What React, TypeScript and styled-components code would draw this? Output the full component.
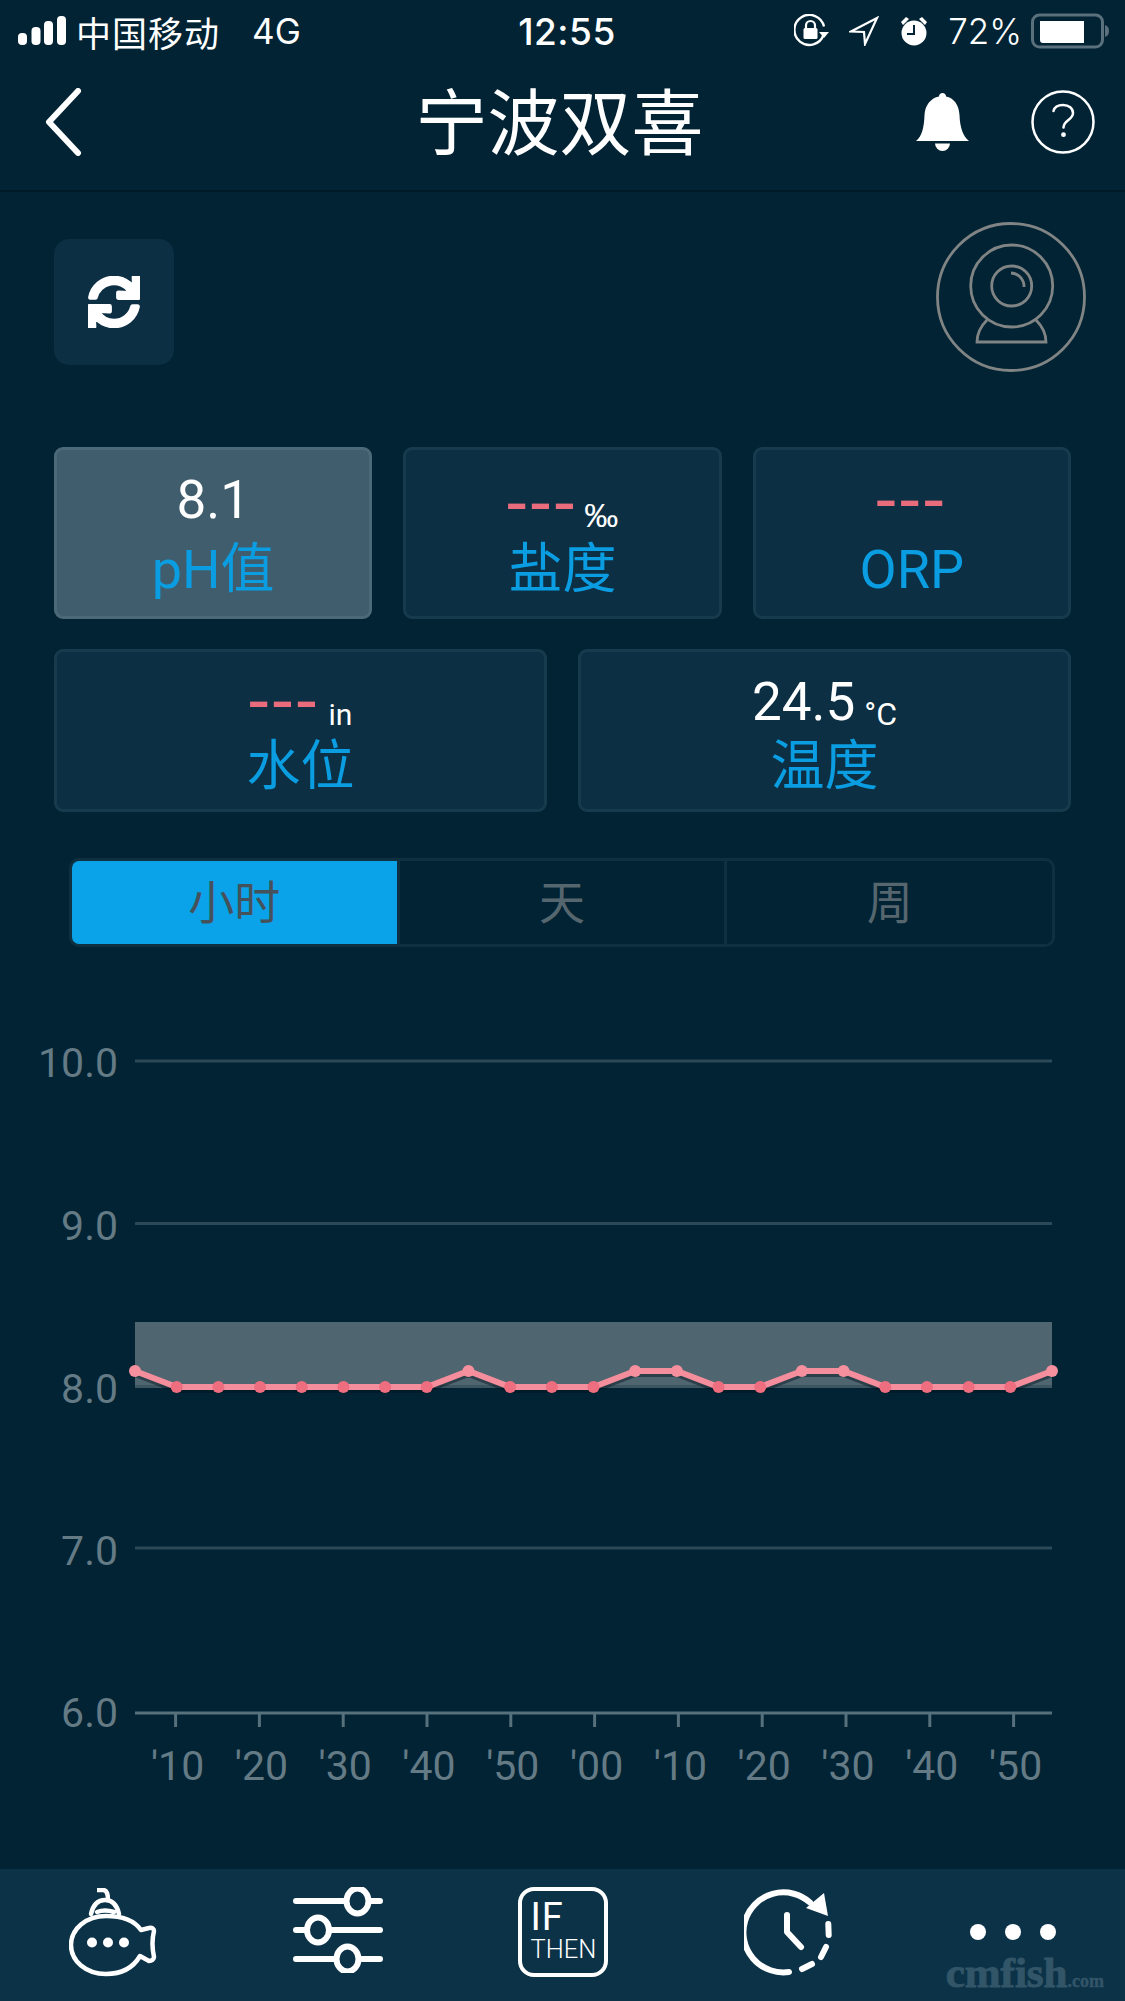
import React from "react";
import styled, { createGlobalStyle } from "styled-components";
import { FaSync } from "react-icons/fa";

const Global = createGlobalStyle`
  html, body { margin: 0; padding: 0; background: #012333; }
  * { box-sizing: border-box; }
`;
const FONT = `Roboto, "Noto Sans CJK SC", sans-serif`;
const UI_FONT = `Inter, "Noto Sans CJK SC", sans-serif`;

const Page = styled.div`
  width: 1125px; height: 2001px; display: flex; flex-direction: column;
  background: #012333; color: #fff; font-family: ${FONT}; overflow: hidden;
`;
const Header = styled.header`
  height: 192px; border-bottom: 2px solid #001a28; display: flex; flex-direction: column;
`;
const StatusBar = styled.div`
  height: 62px; display: grid; grid-template-columns: 1fr auto 1fr; align-items: center; padding: 0 15px 0 18px;
`;
const StatusLeft = styled.div`
  display: flex; align-items: center; font-family: ${UI_FONT};
`;
const Carrier = styled.span`margin-left: 10px; font-size: 35px; font-weight: 400; letter-spacing: 1px;`;
const Network = styled.span`margin-left: 32px; font-size: 35px; font-weight: 400;`;
const Time = styled.div`font-family: ${UI_FONT}; font-size: 37px; font-weight: 500; letter-spacing: 0.5px; margin-left: 6px;`;
const StatusRight = styled.div`
  display: flex; align-items: center; justify-content: flex-end;
`;
const Percent = styled.span`font-family: ${UI_FONT}; font-size: 35px; font-weight: 300; margin: 0 9px 0 19px;`;
const StatusIcon = styled.svg<{ $ml?: number }>`display: block; margin-left: ${(p) => p.$ml ?? 0}px;`;
const NavBar = styled.div`
  flex: 1; display: flex; align-items: center; justify-content: space-between; padding: 0 30px 8px 42px;
`;
const Title = styled.h1`
  margin: 6px 0 0 117px; font-size: 72px; font-weight: 400; line-height: 80px; letter-spacing: 0;
`;
const NavRight = styled.div`display: flex; align-items: center; gap: 61px;`;

const Toolbar = styled.div`
  display: flex; justify-content: space-between; align-items: flex-start; padding: 30px 37px 0 54px; height: 179px;
`;
const RefreshButton = styled.button`
  width: 120px; height: 126px; margin-top: 17px; padding: 0; border: 0; border-radius: 15px;
  background: #0c2f43; color: #fff; display: flex; align-items: center; justify-content: center;
`;
const Cards = styled.section`
  margin-top: 76px; padding: 0 54px; display: flex; flex-direction: column; gap: 30px;
`;
const CardRow = styled.div<{ $h: number }>`
  display: flex; gap: 31px; height: ${(p) => p.$h}px;
`;
const Card = styled.div<{ $active?: boolean }>`
  flex: 1; display: flex; flex-direction: column; align-items: center; border-radius: 9px;
  background: ${(p) => (p.$active ? "#3f5d6c" : "#0c2f43")};
  border: 3px solid ${(p) => (p.$active ? "#4b6977" : "#173a4d")};
`;
const ValueSlot = styled.div<{ $h: number }>`
  height: ${(p) => p.$h}px; display: flex; align-items: flex-start; justify-content: center; line-height: 60px;
`;
const Value = styled.span<{ $top: number }>`
  font-size: 53px; font-weight: 400; color: #fff; margin-top: ${(p) => p.$top}px;
`;
const Dashes = styled.span<{ $top: number }>`
  font-size: 72px; font-weight: 400; letter-spacing: 4px; color: #e96c7d; line-height: 60px; margin-top: ${(p) => p.$top}px;
`;
const Unit = styled.span<{ $top: number; $size: number; $ml: number }>`
  font-size: ${(p) => p.$size}px; font-weight: 400; color: #fff; margin-left: ${(p) => p.$ml}px; margin-top: ${(p) => p.$top}px;
`;
const PerMille = styled(Unit)`font-family: "Liberation Sans", sans-serif;`;
const Label = styled.div`font-size: 54px; line-height: 60px; color: #0a9de2; font-weight: 400;`;

const Tabs = styled.div`
  margin: 46px 70px 0 69px; height: 89px; display: flex; border: 3px solid #0f3040; border-radius: 10px; overflow: hidden;
`;
const Tab = styled.div<{ $active?: boolean }>`
  flex: 1; display: flex; align-items: center; justify-content: center; padding-bottom: 7px; font-size: 46px; font-weight: 400;
  background: ${(p) => (p.$active ? "#0aa3e9" : "transparent")};
  color: ${(p) => (p.$active ? "#45525c" : "#56666f")};
  & + & { border-left: 3px solid #0f3040; }
`;
const Chart = styled.svg`display: block; flex: 1; width: 1125px;`;
const BottomBar = styled.nav`
  position: relative; height: 132px; background: #0c3247; display: grid; grid-template-columns: repeat(5, 225px);
  align-items: center; justify-items: center;
`;
const NavItem = styled.div<{ $lift: number }>`
  display: flex; margin-bottom: ${(p) => p.$lift}px;
`;
const IfThen = styled.div`
  width: 90px; height: 90px; border: 4px solid #fff; border-radius: 16px; padding: 8px 0 0 9px;
  display: flex; flex-direction: column; line-height: 1;
`;
const IfText = styled.span`font-size: 38px; font-weight: 400; line-height: 36px; letter-spacing: 1px;`;
const ThenText = styled.span`font-size: 25.5px; font-weight: 300; line-height: 26px; margin-top: 1px;`;
const Watermark = styled.div`
  position: absolute; right: 21px; bottom: 3px; font-family: "Liberation Serif", serif; font-weight: 700;
  font-size: 43px; line-height: 34px; letter-spacing: 0; color: #325568; -webkit-text-stroke: 1px #325568;
`;
const WatermarkSmall = styled.span`font-size: 18px; letter-spacing: 0; -webkit-text-stroke: 0.4px #325568;`;

const points = [1,0,0,0,0,0,0,0,1,0,0,0,1,1,0,0,1,1,0,0,0,0,1];
const px = (i: number) => 135 + (i * 917) / 22;
const py = (v: number) => (v ? 1371 : 1387);
const poly = points.map((v, i) => `${px(i)},${py(v)}`).join(" ");
const xLabels = ["'10","'20","'30","'40","'50","'00","'10","'20","'30","'40","'50"];
const yLabels: [string, number][] = [["10.0",1077],["9.0",1240],["8.0",1403],["7.0",1565],["6.0",1727]];
const grid = [1061, 1223.5, 1548];

const Signal = () => (
  <StatusIcon width="48" height="30" viewBox="0 0 48 30" fill="#fff">
    <rect x="0" y="17" width="9" height="12" rx="4"/>
    <rect x="13.500" y="11" width="9" height="18" rx="4"/>
    <rect x="26" y="5" width="9" height="24" rx="4"/>
    <rect x="39" y="0" width="9" height="29" rx="4"/>
  </StatusIcon>
);
const LockRotate = () => (
  <StatusIcon width="36" height="34" viewBox="0 0 36 34">
    <path d="M29.500 21A15 15 0 1 1 30 12.500" fill="none" stroke="#fff" strokeWidth="2.400"/>
    <path d="M25 18h10l-5 6z" fill="#fff"/>
    <rect x="9.500" y="14" width="14" height="11" rx="1.500" fill="#fff"/>
    <path d="M12 14v-2.500a4.500 4.500 0 0 1 9 0V14" fill="none" stroke="#fff" strokeWidth="2.200"/>
  </StatusIcon>
);
const LocationArrow = () => (
  <StatusIcon $ml={19} width="30" height="30" viewBox="0 0 30 30">
    <path d="M28 2L2 15.500l13 .5 1 12z" fill="none" stroke="#fff" strokeWidth="2.200"/>
  </StatusIcon>
);
const Alarm = () => (
  <StatusIcon $ml={20} width="30" height="32" viewBox="0 0 30 32">
    <circle cx="15" cy="18" r="12.500" fill="#fff"/>
    <path d="M2 7l5-5 3 2-6 6zM28 7l-5-5-3 2 6 6z" fill="#fff"/>
    <path d="M15 10v9H8" fill="none" stroke="#012333" strokeWidth="2"/>
  </StatusIcon>
);
const Battery = () => (
  <StatusIcon width="79" height="36" viewBox="0 0 79 36">
    <rect x="1.500" y="2" width="70" height="32" rx="7" fill="none" stroke="#5a717d" strokeWidth="3"/>
    <path d="M9 8h44v22H12a3 3 0 0 1-3-3z" fill="#fff"/>
    <path d="M74 12c3 1 4 3 4 6s-1 5-4 6z" fill="#5a717d"/>
  </StatusIcon>
);

const Camera = () => (
  <svg width="152" height="152" viewBox="0 0 152 152" fill="none" stroke="#808484" strokeWidth="2.800">
    <circle cx="75" cy="75" r="73.500"/>
    <circle cx="75.700" cy="64" r="41"/>
    <circle cx="75.700" cy="64" r="20"/>
    <path d="M75 51a13.500 13.500 0 0 1 13 14"/>
    <path d="M51 98c-6 6-10 13-10 22h69c0-9-4-16-10-22"/>
  </svg>
);
const Sub = () => (
  <svg width="88" height="90" viewBox="0 0 88 90" fill="none" stroke="#fff" strokeWidth="4.500" strokeLinecap="round" strokeLinejoin="round">
    <path d="M72 42C65 32 52 28 37 28 17 28 2 41 2 57s15 29 35 29c15 0 27-6 34-18l9 5c3 0 5-2 5-4-2-9-2-18 0-26 0-2-2-4-5-3z"/>
    <path d="M22 26c2-9 7-14 14-14s12 5 14 14M28 24c5-2 11-2 17 0"/>
    <path d="M28 2h6c3 0 5 3 5 10" strokeLinecap="butt"/>
    <g fill="#fff" stroke="none">
      <circle cx="23" cy="54.500" r="5"/><circle cx="39" cy="54.500" r="5"/><circle cx="55" cy="54.500" r="5"/>
    </g>
  </svg>
);
const Sliders = () => (
  <svg width="90" height="86" viewBox="0 0 90 86" fill="none" stroke="#fff" strokeWidth="6" strokeLinecap="round">
    <path d="M3 14h49M77 14h10M3 43h10M38 43h49M3 72h39M67 72h20"/>
    <ellipse cx="64.500" cy="14" rx="11" ry="12.500"/>
    <ellipse cx="25" cy="43" rx="11" ry="12.500"/>
    <ellipse cx="54.500" cy="72" rx="11" ry="12.500"/>
  </svg>
);
const ClockRotate = () => (
  <svg width="88" height="90" viewBox="0 0 88 90" fill="none" stroke="#fff" strokeWidth="6" strokeLinecap="round" strokeLinejoin="round">
    <path d="M45 84A40 40 0 1 1 66 14.500"/>
    <path d="M62 20L80 5l4 23z" fill="#fff" stroke="none"/>
    <path d="M84.300 36l.4 11M82 59l-5 10M68 76l-10 5M43 27v17l14 15"/>
  </svg>
);
const Dots = () => (
  <svg width="86" height="20" viewBox="0 0 86 20" fill="#fff">
    <circle cx="8" cy="10" r="8"/><circle cx="43" cy="10" r="8"/><circle cx="78" cy="10" r="8"/>
  </svg>
);

export default function App() {
  return (
    <Page>
      <Global />
      <Header>
        <StatusBar>
          <StatusLeft>
            <Signal />
            <Carrier>中国移动</Carrier>
            <Network>4G</Network>
          </StatusLeft>
          <Time>12:55</Time>
          <StatusRight>
            <LockRotate />
            <LocationArrow />
            <Alarm />
            <Percent>72%</Percent>
            <Battery />
          </StatusRight>
        </StatusBar>
        <NavBar>
          <svg width="44" height="68" viewBox="0 0 44 68" fill="none" stroke="#fff" strokeWidth="6" strokeLinecap="round" strokeLinejoin="round">
            <path d="M36 3L7 34l29 31" />
          </svg>
          <Title>宁波双喜</Title>
          <NavRight>
            <svg width="54" height="60" viewBox="0 0 54 60" fill="#fff">
              <path d="M26.500 1c2 0 3.500 1.500 3.500 3.500C38 6 43 13 43.500 23 44 36 47 44 53 49H0c6-5 8-13 8.500-26C9 13 15 6 23 4.500 23 2.500 24.500 1 26.500 1z"/>
              <path d="M19 51.500h15a7.500 7.500 0 0 1-15 0z"/>
            </svg>
            <svg width="64" height="64" viewBox="0 0 64 64" fill="none" stroke="#fff" strokeWidth="2.500">
              <circle cx="32" cy="32" r="30.500"/>
              <path d="M22.500 21c1-4 5-6 9.500-6 6 0 10 3.500 10 8 0 7-9.500 7-9.500 14.500" strokeLinecap="round"/>
              <circle cx="32.500" cy="44.700" r="2.400" fill="#fff" stroke="none"/>
            </svg>
          </NavRight>
        </NavBar>
      </Header>

      <Toolbar>
        <RefreshButton aria-label="refresh"><FaSync size={52} stroke="currentColor" strokeWidth={22} /></RefreshButton>
        <Camera />
      </Toolbar>

      <Cards>
        <CardRow $h={172}>
          <Card $active>
            <ValueSlot $h={90}><Value $top={20}>8.1</Value></ValueSlot>
            <Label>pH值</Label>
          </Card>
          <Card>
            <ValueSlot $h={90}><Dashes $top={24}>---</Dashes><PerMille $top={35} $size={34} $ml={6} as="span">‰</PerMille></ValueSlot>
            <Label>盐度</Label>
          </Card>
          <Card>
            <ValueSlot $h={90}><Dashes $top={21}>---</Dashes></ValueSlot>
            <Label>ORP</Label>
          </Card>
        </CardRow>
        <CardRow $h={163}>
          <Card>
            <ValueSlot $h={85}><Dashes $top={20}>---</Dashes><Unit $top={33} $size={30} $ml={8}>in</Unit></ValueSlot>
            <Label>水位</Label>
          </Card>
          <Card>
            <ValueSlot $h={85}><Value $top={20}>24.5</Value><Unit $top={32} $size={32} $ml={9}>°C</Unit></ValueSlot>
            <Label>温度</Label>
          </Card>
        </CardRow>
      </Cards>

      <Tabs>
        <Tab $active>小时</Tab>
        <Tab>天</Tab>
        <Tab>周</Tab>
      </Tabs>

      <Chart viewBox="0 947 1125 922" preserveAspectRatio="xMinYMin">
        {grid.map((y) => (
          <line key={y} x1="135" x2="1052" y1={y} y2={y} stroke="#2b4957" strokeWidth="3" />
        ))}
        <rect x="135" y="1322" width="917" height="63" fill="#4f6670" />
        <rect x="135" y="1385" width="917" height="3" fill="#3c5560" />
        <line x1="135" x2="1052" y1="1713" y2="1713" stroke="#56707c" strokeWidth="3" />
        {xLabels.map((l, i) => {
          const x = 175.6 + i * 83.8;
          return (
            <g key={i}>
              <line x1={x} x2={x} y1="1713" y2="1727" stroke="#56707c" strokeWidth="3" />
              <text x={x + 2} y="1780" textAnchor="middle" fontFamily="Roboto, sans-serif" fontWeight="400" fontSize="41" fill="#647a85">{l}</text>
            </g>
          );
        })}
        {yLabels.map(([l, y]) => (
          <text key={l} x="118" y={y} textAnchor="end" fontFamily="Roboto, sans-serif" fontWeight="400" fontSize="41" fill="#647a85">{l}</text>
        ))}
        <polyline points={points.map((v, i) => `${px(i)},${py(v) + 3}`).join(" ")} fill="none" stroke="#00121c" strokeOpacity="0.45" strokeWidth="6" />
        <polyline points={poly} fill="none" stroke="#f48d9c" strokeWidth="6" />
        {points.map((v, i) => (
          <circle key={i} cx={px(i)} cy={py(v)} r="6" fill={v ? "#f6909f" : "#ee6d7e"} />
        ))}
      </Chart>

      <BottomBar>
        <NavItem $lift={4}><Sub /></NavItem>
        <NavItem $lift={10}><Sliders /></NavItem>
        <NavItem $lift={6}>
          <IfThen>
            <IfText>IF</IfText>
            <ThenText>THEN</ThenText>
          </IfThen>
        </NavItem>
        <NavItem $lift={4}><ClockRotate /></NavItem>
        <NavItem $lift={6}><Dots /></NavItem>
        <Watermark>cmfish<WatermarkSmall>.com</WatermarkSmall></Watermark>
      </BottomBar>
    </Page>
  );
}
